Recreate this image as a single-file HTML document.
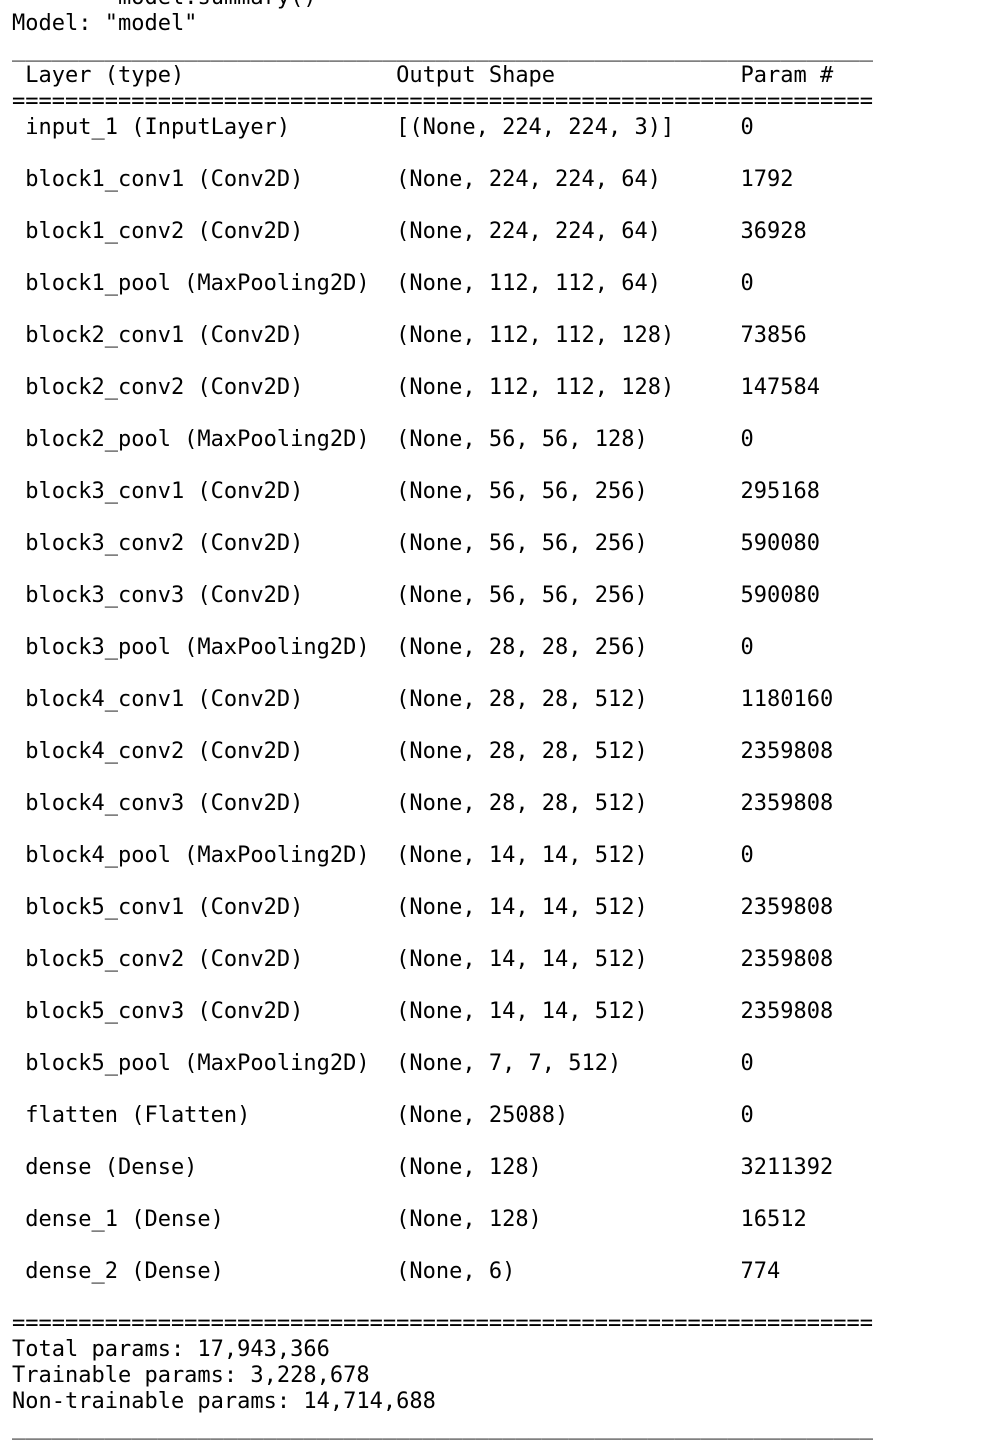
<!DOCTYPE html>
<html><head><meta charset="utf-8"><style>
html,body{margin:0;padding:0;background:#fff;width:990px;height:1450px;overflow:hidden}
pre{position:absolute;left:12px;top:-15px;margin:0;font-family:"DejaVu Sans Mono","Liberation Mono",monospace;font-size:22px;line-height:26px;color:#000}
.b{color:#1a1aa6}
</style></head><body>
<pre>   <span class="b">----</span> model.summary()
Model: "model"
_________________________________________________________________
 Layer (type)                Output Shape              Param #   
=================================================================
 input_1 (InputLayer)        [(None, 224, 224, 3)]     0         
                                                                 
 block1_conv1 (Conv2D)       (None, 224, 224, 64)      1792      
                                                                 
 block1_conv2 (Conv2D)       (None, 224, 224, 64)      36928     
                                                                 
 block1_pool (MaxPooling2D)  (None, 112, 112, 64)      0         
                                                                 
 block2_conv1 (Conv2D)       (None, 112, 112, 128)     73856     
                                                                 
 block2_conv2 (Conv2D)       (None, 112, 112, 128)     147584    
                                                                 
 block2_pool (MaxPooling2D)  (None, 56, 56, 128)       0         
                                                                 
 block3_conv1 (Conv2D)       (None, 56, 56, 256)       295168    
                                                                 
 block3_conv2 (Conv2D)       (None, 56, 56, 256)       590080    
                                                                 
 block3_conv3 (Conv2D)       (None, 56, 56, 256)       590080    
                                                                 
 block3_pool (MaxPooling2D)  (None, 28, 28, 256)       0         
                                                                 
 block4_conv1 (Conv2D)       (None, 28, 28, 512)       1180160   
                                                                 
 block4_conv2 (Conv2D)       (None, 28, 28, 512)       2359808   
                                                                 
 block4_conv3 (Conv2D)       (None, 28, 28, 512)       2359808   
                                                                 
 block4_pool (MaxPooling2D)  (None, 14, 14, 512)       0         
                                                                 
 block5_conv1 (Conv2D)       (None, 14, 14, 512)       2359808   
                                                                 
 block5_conv2 (Conv2D)       (None, 14, 14, 512)       2359808   
                                                                 
 block5_conv3 (Conv2D)       (None, 14, 14, 512)       2359808   
                                                                 
 block5_pool (MaxPooling2D)  (None, 7, 7, 512)         0         
                                                                 
 flatten (Flatten)           (None, 25088)             0         
                                                                 
 dense (Dense)               (None, 128)               3211392   
                                                                 
 dense_1 (Dense)             (None, 128)               16512     
                                                                 
 dense_2 (Dense)             (None, 6)                 774       
                                                                 
=================================================================
Total params: 17,943,366
Trainable params: 3,228,678
Non-trainable params: 14,714,688
_________________________________________________________________
</pre>
</body></html>
